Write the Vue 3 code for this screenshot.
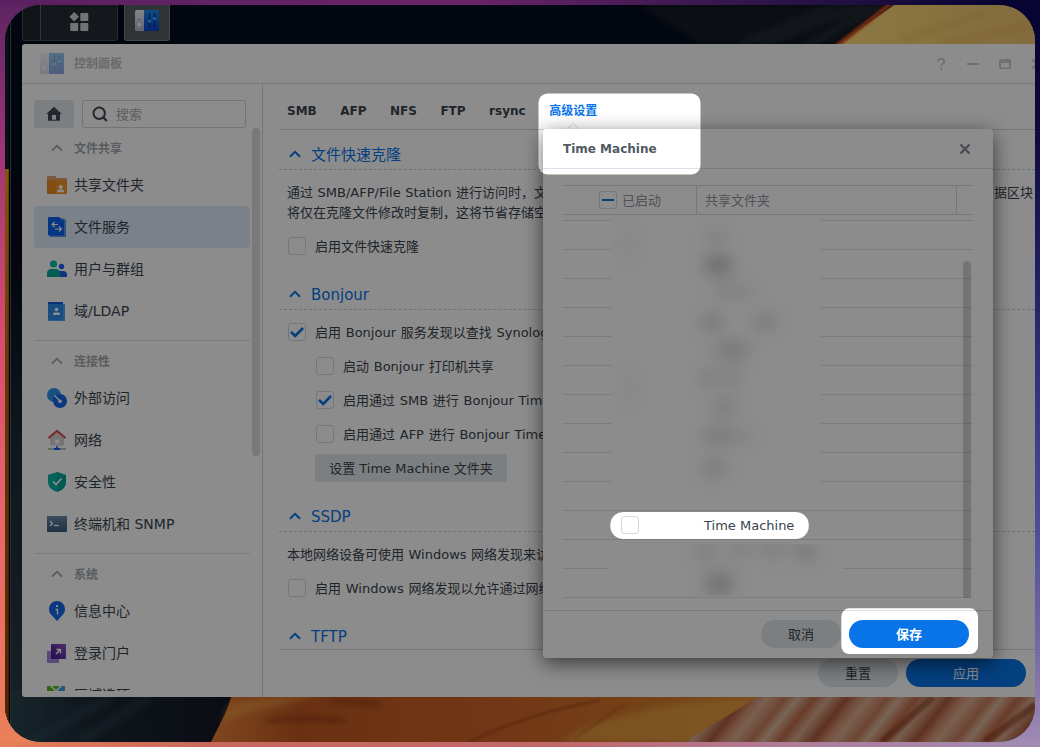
<script setup>
const groups = [
  {
    title: '文件共享',
    items: [
      { label: '共享文件夹', icon: 'folder' },
      { label: '文件服务', icon: 'service', active: true },
      { label: '用户与群组', icon: 'users' },
      { label: '域/LDAP', icon: 'ldap' },
    ],
  },
  {
    title: '连接性',
    items: [
      { label: '外部访问', icon: 'external' },
      { label: '网络', icon: 'network' },
      { label: '安全性', icon: 'security' },
      { label: '终端机和 SNMP', icon: 'terminal' },
    ],
  },
  {
    title: '系统',
    items: [
      { label: '信息中心', icon: 'info' },
      { label: '登录门户', icon: 'portal' },
      { label: '区域选项', icon: 'region' },
    ],
  },
]

const tabs = ['SMB', 'AFP', 'NFS', 'FTP', 'rsync']
const rows = Array.from({ length: 14 }, (_, i) => (i === 11 ? 'Time Machine' : ''))
</script>

<template>
  <div class="backdrop">
    <div class="frame">
      <svg class="wallpaper" width="1030" height="737" viewBox="5 5 1030 737">
        <defs>
          <linearGradient id="wpDark" x1="0" y1="0" x2="0" y2="1">
            <stop offset="0" stop-color="#030c1e" />
            <stop offset=".35" stop-color="#070c1e" />
            <stop offset=".6" stop-color="#1b2b3a" />
            <stop offset=".85" stop-color="#263540" />
            <stop offset="1" stop-color="#26404c" />
          </linearGradient>
          <linearGradient id="wpBottom" x1="0" y1="0" x2="1" y2="0">
            <stop offset="0" stop-color="#2a4650" />
            <stop offset=".35" stop-color="#1d2834" />
            <stop offset="1" stop-color="#101422" />
          </linearGradient>
          <linearGradient id="wpOrange" x1="0" y1="0" x2="1" y2="0">
            <stop offset="0" stop-color="#ea8038" />
            <stop offset=".15" stop-color="#c05a22" />
            <stop offset=".5" stop-color="#d06428" />
            <stop offset=".75" stop-color="#d4782c" />
            <stop offset="1" stop-color="#e09038" />
          </linearGradient>
          <linearGradient id="wpYellow" x1="0" y1="0" x2="1" y2="0">
            <stop offset="0" stop-color="#ffdc7c" />
            <stop offset=".5" stop-color="#f6cf72" />
            <stop offset="1" stop-color="#f0c472" />
          </linearGradient>
          <linearGradient id="wpStripe" gradientUnits="userSpaceOnUse" x1="0" y1="0" x2="62" y2="50" spreadMethod="repeat">
            <stop offset="0" stop-color="#dcae90" />
            <stop offset=".18" stop-color="#c87c5c" />
            <stop offset=".3" stop-color="#dcb89c" />
            <stop offset=".46" stop-color="#c06c4a" />
            <stop offset=".6" stop-color="#d8aa8c" />
            <stop offset=".78" stop-color="#ac5a3c" />
            <stop offset=".9" stop-color="#d49070" />
            <stop offset="1" stop-color="#dcae90" />
          </linearGradient>
          <linearGradient id="edgeStrip" x1="0" y1="0" x2="0" y2="1">
            <stop offset="0" stop-color="#ee9e14" />
            <stop offset=".35" stop-color="#bc6410" />
            <stop offset="1" stop-color="#90400e" />
          </linearGradient>
          <filter id="soft"><feGaussianBlur stdDeviation="3" /></filter>
          <filter id="soft1"><feGaussianBlur stdDeviation="1" /></filter>
        </defs>
        <rect x="5" y="5" width="1030" height="737" fill="url(#wpDark)" />
        <path d="M640 5H900L840 44H700Z" fill="#151c28" filter="url(#soft)" />
        <path d="M740 44L850 0M760 44L866 5M800 50L880 5" stroke="#3e4c50" stroke-width="4" opacity=".6" filter="url(#soft)" fill="none" />
        <path d="M838 44L894 5H1035V60H838Z" fill="url(#wpYellow)" />
        <path d="M834 48L893 2" stroke="#d64f20" stroke-width="4" filter="url(#soft1)" />
        <path d="M900 40L990 12M940 44L1030 26" stroke="#e8b45c" stroke-width="6" opacity=".5" filter="url(#soft)" />
        <rect x="5" y="690" width="260" height="52" fill="url(#wpBottom)" />
        <path d="M30 742L110 697M80 742L150 697" stroke="#34525c" stroke-width="10" opacity=".35" filter="url(#soft)" />
        <path d="M232 695L226 712L211 742H790V695Z" fill="url(#wpOrange)" />
        <path d="M228 706Q290 690 330 692L270 708Q240 714 222 724Z" fill="#f4a84c" opacity=".5" filter="url(#soft)" />
        <path d="M266 722Q300 716 345 722M330 700L380 704" stroke="#7c2c10" stroke-width="7" opacity=".4" filter="url(#soft)" fill="none" />
        <path d="M470 742Q520 716 600 700" stroke="#94401a" stroke-width="3" opacity=".5" filter="url(#soft1)" fill="none" />
        <path d="M560 742Q620 702 760 698L690 742Z" fill="#e8a444" opacity=".7" filter="url(#soft)" />
        <path d="M575 738L625 704" stroke="#a4561e" stroke-width="2" opacity=".6" filter="url(#soft1)" />
        <path d="M762 695L684 742H1035V695Z" fill="url(#wpStripe)" />
        <path d="M933 697L882 742M1035 705L985 742" stroke="#7f3218" stroke-width="7" opacity=".55" filter="url(#soft1)" />
        <path d="M5 5H9V742H5Z" fill="#0a2028" />
        <path d="M5 169H9V742H5Z" fill="url(#edgeStrip)" />
        <path d="M9.5 5V742" stroke="#020205" stroke-width="1.4" />
        <path d="M10.5 5V742" stroke="#50565c" stroke-width="1" />
      </svg>

      <div class="taskbar">
        <div class="menu-button">
          <svg width="20" height="20" viewBox="0 0 20 20" fill="#d0d2d6">
            <path d="M5.2 0L10 4.8 5.2 9.6.4 4.8Z" />
            <rect x="11.3" y="1" width="8" height="8" rx=".8" />
            <rect x="1.2" y="11" width="8" height="8" rx=".8" />
            <rect x="11.3" y="11" width="8" height="8" rx=".8" />
          </svg>
        </div>
        <div class="app-button">
          <svg width="24" height="22" viewBox="0 0 24 22">
            <defs>
              <linearGradient id="panelA" x1="0" y1="0" x2="0" y2="1">
                <stop offset="0" stop-color="#f0f0fa" /><stop offset="1" stop-color="#b4b4d2" />
              </linearGradient>
              <linearGradient id="panelB" x1="0" y1="0" x2="0" y2="1">
                <stop offset="0" stop-color="#1b8ce8" /><stop offset="1" stop-color="#0b3fd0" />
              </linearGradient>
            </defs>
            <path d="M1.5 0H9V21H1.5Q0 21 0 19.500V1.500Q0 0 1.500 0Z" fill="url(#panelA)" />
            <path d="M9 0H23Q24 0 24 1V20Q24 21 23 21H9Z" fill="url(#panelB)" />
            <circle cx="4.500" cy="14.500" r="2.600" fill="#f4f4fb" stroke="#a4a4c0" stroke-width=".6" />
            <circle cx="4.500" cy="9.500" r=".6" fill="#555" />
            <path d="M14.500 3V17M19.500 3V17" stroke="#0a2d78" stroke-width="1.100" />
            <circle cx="14.500" cy="11" r="1.500" fill="#48b4ff" /><circle cx="19.500" cy="8.500" r="1.500" fill="#48b4ff" />
          </svg>
        </div>
      </div>

      <section class="window">
        <header class="titlebar">
          <svg class="title-icon" width="24" height="22" viewBox="0 0 24 22">
            <path d="M1.500 0H9V21H1.500Q0 21 0 19.500V1.500Q0 0 1.500 0Z" fill="url(#panelA)" />
            <path d="M9 0H23Q24 0 24 1V20Q24 21 23 21H9Z" fill="url(#panelB)" />
            <circle cx="4.500" cy="14.500" r="2.600" fill="#f4f4fb" stroke="#a4a4c0" stroke-width=".6" />
            <circle cx="4.500" cy="9.500" r=".6" fill="#555" />
            <path d="M14.500 3V17M19.500 3V17" stroke="#0a2d78" stroke-width="1.100" />
            <circle cx="14.500" cy="11" r="1.500" fill="#48b4ff" /><circle cx="19.500" cy="8.500" r="1.500" fill="#48b4ff" />
          </svg>
          <span class="title-text">控制面板</span>
          <div class="controls">
            <svg viewBox="0 0 16 16"><path d="M4.800 5.600Q4.800 2.900 8 2.900T11.200 5.600Q11.200 7.100 9.600 8 8.200 8.800 8.200 10.600" fill="none" stroke="#cdcdcd" stroke-width="1.800" /><rect x="7.200" y="12.200" width="2" height="2" fill="#cdcdcd" /></svg>
            <svg viewBox="0 0 16 16"><rect x="2" y="7" width="12" height="2" fill="#cdcdcd" /></svg>
            <svg viewBox="0 0 16 16"><path d="M3 3H13Q14 3 14 4V12Q14 13 13 13H3Q2 13 2 12V4Q2 3 3 3ZM4 7V11.500H12V7Z" fill="#cdcdcd" fill-rule="evenodd" /></svg>
            <svg viewBox="0 0 16 16"><path d="M3.500 3.500L12.500 12.500M12.500 3.500L3.500 12.500" stroke="#cdcdcd" stroke-width="2.400" /></svg>
          </div>
        </header>

        <div class="body">
          <aside class="sidebar">
            <div class="search-row">
              <div class="home">
                <svg width="16" height="16" viewBox="0 0 16 16"><path d="M8 .8L15.800 8H14V14.700H2V8H.2Z" fill="#414b55" /><rect x="6" y="9" width="4" height="4.700" fill="#e4eaf0" /></svg>
              </div>
              <div class="search">
                <svg width="16" height="16" viewBox="0 0 16 16" fill="none" stroke="#414b55" stroke-width="2"><circle cx="7.200" cy="7.200" r="5.700" /><path d="M11 11L14.800 15" stroke-width="2.200" /></svg>
                <span class="label">搜索</span>
              </div>
            </div>
            <nav class="nav">
              <div v-for="g in groups" :key="g.title" class="group">
                <div class="group-title">
                  <svg width="12" height="8" viewBox="0 0 12 8"><path d="M1 6.700L6 1.700 11 6.700" fill="none" stroke="#9fa5aa" stroke-width="1.800" /></svg>
                  <span class="label">{{ g.title }}</span>
                </div>
                <div v-for="it in g.items" :key="it.label" class="item" :class="{ active: it.active }">
                  <svg class="item-icon" width="20" height="20" viewBox="0 0 20 20">
                    <template v-if="it.icon === 'folder'">
                      <path d="M1 1H8L10 3H19Q20 3 20 4V10H0V2Q0 1 1 1Z" fill="#e0a070" />
                      <path d="M0 5H20V18Q20 19 19 19H1Q0 19 0 18Z" fill="#ed8a24" />
                      <path d="M9 5H20V18Q20 19 19 19H9Z" fill="#f89c34" opacity=".6" />
                      <circle cx="13.700" cy="12" r="2" fill="#fff" /><path d="M10 17.200Q10 14.600 12 14.600H15.200Q17.200 14.600 17.200 17.200Z" fill="#fff" />
                    </template>
                    <template v-else-if="it.icon === 'service'">
                      <path d="M3 1.500H17L19 3.500V20H3Z" fill="#5a93e8" />
                      <path d="M2 0H12L17 4V18.500H1V1Q1 0 2 0Z" fill="#0a62ee" />
                      <path d="M11 7.500H5M7.500 5L5 7.500 7.500 10M8 12H14.500M12 9.500L14.500 12 12 14.500" stroke="#fff" stroke-width="1.100" fill="none" />
                    </template>
                    <template v-else-if="it.icon === 'users'">
                      <circle cx="6.500" cy="5" r="3.600" fill="#10bcb0" />
                      <circle cx="14.500" cy="7.500" r="2.700" fill="#1a62ee" />
                      <path d="M11 12H16Q20 12 20 16V18H11Z" fill="#1e5ce8" />
                      <path d="M0 18V14.500Q0 10 4.500 10H8.500Q13 10 13 14.500V18Z" fill="#08a89c" />
                    </template>
                    <template v-else-if="it.icon === 'ldap'">
                      <path d="M2 1H16V4H1V2Q1 1 2 1Z" fill="#0a5ce0" /><path d="M3 3H18V20H2Q1 20 1 19V3Z" fill="#4aa4f4" /><path d="M1 3H16V19H1Z" fill="#2a8ee8" />
                      <circle cx="9.500" cy="8.500" r="1.800" fill="#fff" /><path d="M6 14V12.500Q6 11.500 7.500 11.500H11.500Q13 11.500 13 12.500V14Z" fill="#fff" />
                    </template>
                    <template v-else-if="it.icon === 'external'">
                      <circle cx="7" cy="7" r="7" fill="#2d93ea" /><circle cx="13" cy="13" r="7" fill="#1763e8" />
                      <path d="M7.500 7.500L12.500 12.500" stroke="#fff" stroke-width="1.200" /><circle cx="13" cy="13.200" r="1.800" fill="#fff" />
                    </template>
                    <template v-else-if="it.icon === 'network'">
                      <path d="M3 8L10 2.500 17 8V15.500H3Z" fill="#d3d3d3" />
                      <path d="M1.500 8L10 1 18.500 8" fill="none" stroke="#df4846" stroke-width="2.200" />
                      <rect x="8" y="9.500" width="4" height="4" fill="#fff" /><rect x="1" y="18" width="18" height="1.800" fill="#b5b9bf" /><path d="M9.200 16H10.800V18H13V20H7V18H9.200Z" fill="#0a62ee" />
                    </template>
                    <template v-else-if="it.icon === 'security'">
                      <path d="M10 0L19 3V10Q19 17 10 20 1 17 1 10V3Z" fill="#0cb2a6" /><path d="M10 0L19 3V10Q19 17 10 20Z" fill="#07a59a" />
                      <path d="M6 9.500L9 12.500 14.500 6.500" fill="none" stroke="#fff" stroke-width="1.700" />
                    </template>
                    <template v-else-if="it.icon === 'terminal'">
                      <rect x="0" y="2" width="20" height="16" rx="1" fill="url(#term)" />
                      <defs><linearGradient id="term" x1="0" y1="0" x2="0" y2="1"><stop offset="0" stop-color="#6b8aa8" /><stop offset="1" stop-color="#37597c" /></linearGradient></defs>
                      <path d="M3 7L5.500 9.500 3 12" fill="none" stroke="#fff" stroke-width="1.200" /><path d="M7 11.500H12" stroke="#fff" stroke-width="1.200" />
                    </template>
                    <template v-else-if="it.icon === 'info'">
                      <path d="M10 0A8 8 0 0 1 18 8Q18 12 14.500 15L10 20 5.500 15Q2 12 2 8A8 8 0 0 1 10 0Z" fill="#1567ec" />
                      <rect x="9" y="4" width="2" height="2" fill="#fff" /><path d="M8.500 8.500H10.500V13.500" fill="none" stroke="#fff" stroke-width="1.300" />
                    </template>
                    <template v-else-if="it.icon === 'portal'">
                      <rect x="0" y="8" width="12" height="12" rx="1" fill="#a688dc" /><rect x="4" y="1" width="15" height="15" rx="1" fill="url(#port)" />
                      <defs><linearGradient id="port" x1="1" y1="0" x2="0" y2="1"><stop offset="0" stop-color="#8c50ba" /><stop offset="1" stop-color="#3a1e96" /></linearGradient></defs>
                      <path d="M9 11L13.500 6.500M9.500 6.500H13.500V10.500" fill="none" stroke="#fff" stroke-width="1.300" />
                    </template>
                    <template v-else>
                      <rect x="0" y="1" width="18" height="18" fill="#5cb41c" /><path d="M18 1V19L9 6 14 1Z" fill="#3d9eea" /><path d="M4 1L9 6 14 1M9 6V19" fill="none" stroke="#fff" stroke-width="1.500" />
                    </template>
                  </svg>
                  <span class="label">{{ it.label }}</span>
                </div>
              </div>
            </nav>
            <div class="side-scroll"></div>
          </aside>

          <main class="main">
            <div class="tabs">
              <span v-for="t in tabs" :key="t" class="tab">{{ t }}</span>
              <span class="tab current">高级设置
                <svg class="tab-arrow" width="14" height="8" viewBox="0 0 14 8"><path d="M1 7.500L7 1.500 13 7.500" fill="#fff" stroke="#ccd8e2" /></svg>
              </span>
            </div>
            <div class="content">
              <section class="sect">
                <h3 class="head"><svg class="chev" viewBox="0 0 12 8"><path d="M1 6.800L6 1.800 11 6.800" /></svg><span class="label">文件快速克隆</span></h3>
                <div class="desc">
                  <div class="desc-line"><span>通过 SMB/AFP/File Station 进行访问时，文</span><span>据区块</span></div>
                  <div class="desc-line"><span>将仅在克隆文件修改时复制，这将节省存储空</span></div>
                </div>
                <div class="check-row"><i class="box"></i><span class="label">启用文件快速克隆</span></div>
              </section>
              <section class="sect">
                <h3 class="head"><svg class="chev" viewBox="0 0 12 8"><path d="M1 6.800L6 1.800 11 6.800" /></svg><span class="label">Bonjour</span></h3>
                <div class="checks">
                  <div class="check-row"><i class="box"><svg viewBox="0 0 16 16"><path d="M2 7.800L6.200 12 14 4" /></svg></i><span class="label">启用 Bonjour 服务发现以查找 Synology</span></div>
                  <div class="check-row sub"><i class="box"></i><span class="label">启动 Bonjour 打印机共享</span></div>
                  <div class="check-row sub"><i class="box"><svg viewBox="0 0 16 16"><path d="M2 7.800L6.200 12 14 4" /></svg></i><span class="label">启用通过 SMB 进行 Bonjour Time</span></div>
                  <div class="check-row sub"><i class="box"></i><span class="label">启用通过 AFP 进行 Bonjour Time</span></div>
                </div>
                <div class="flat-button">设置 Time Machine 文件夹</div>
              </section>
              <section class="sect">
                <h3 class="head"><svg class="chev" viewBox="0 0 12 8"><path d="M1 6.800L6 1.800 11 6.800" /></svg><span class="label">SSDP</span></h3>
                <div class="desc">
                  <div class="desc-line"><span>本地网络设备可使用 Windows 网络发现来访</span></div>
                </div>
                <div class="check-row"><i class="box"></i><span class="label">启用 Windows 网络发现以允许通过网络</span></div>
              </section>
              <section class="sect">
                <h3 class="head"><svg class="chev" viewBox="0 0 12 8"><path d="M1 6.800L6 1.800 11 6.800" /></svg><span class="label">TFTP</span></h3>
              </section>
            </div>
            <footer class="footer">
              <div class="pill">重置</div>
              <div class="pill primary">应用</div>
            </footer>
          </main>
        </div>
      </section>

      <section class="dialog">
        <header class="dialog-title">
          <span>Time Machine</span>
          <svg width="12" height="12" viewBox="0 0 12 12"><path d="M1.500 1.500L10.500 10.500M10.500 1.500L1.500 10.500" stroke="#858d94" stroke-width="2.400" /></svg>
        </header>
        <div class="table">
          <div class="thead">
            <div class="col-enabled"><i class="box"><b></b></i><span class="label">已启动</span></div>
            <div class="col-name"><span class="label">共享文件夹</span></div>
          </div>
          <div class="tbody">
            <div v-for="(r, i) in rows" :key="i" class="row">
              <template v-if="r"><i class="box"></i><span>{{ r }}</span></template>
            </div>
            <svg class="mask mask-top" width="209" height="290" viewBox="612 216 209 290">
              <filter id="smear" x="-100%" y="-100%" width="300%" height="300%"><feGaussianBlur stdDeviation="8" /></filter>
              <rect x="612" y="216" width="209" height="290" fill="#fff" />
              <g filter="url(#smear)" fill="#6a7074">
                <ellipse cx="718" cy="265" rx="15" ry="10" opacity=".4" /><ellipse cx="716" cy="236" rx="12" ry="10" opacity=".12" />
                <ellipse cx="733" cy="291" rx="22" ry="8" opacity=".15" /><ellipse cx="712" cy="322" rx="13" ry="9" opacity=".26" />
                <ellipse cx="765" cy="322" rx="14" ry="9" opacity=".2" /><ellipse cx="732" cy="350" rx="18" ry="9" opacity=".27" />
                <ellipse cx="708" cy="378" rx="10" ry="10" opacity=".18" /><ellipse cx="732" cy="378" rx="10" ry="12" opacity=".16" />
                <ellipse cx="724" cy="408" rx="12" ry="9" opacity=".22" /><ellipse cx="717" cy="436" rx="17" ry="9" opacity=".23" />
                <ellipse cx="742" cy="437" rx="12" ry="8" opacity=".12" /><ellipse cx="714" cy="468" rx="14" ry="10" opacity=".2" />
                <ellipse cx="629" cy="388" rx="9" ry="18" opacity=".07" /><ellipse cx="628" cy="245" rx="10" ry="22" opacity=".05" />
              </g>
            </svg>
            <svg class="mask mask-bottom" width="234" height="52" viewBox="609 544 234 52">
              <rect x="609" y="544" width="234" height="52" fill="#fff" />
              <g filter="url(#smear)" fill="#6a7074">
                <ellipse cx="719" cy="584" rx="16" ry="13" opacity=".3" /><ellipse cx="706" cy="552" rx="12" ry="9" opacity=".17" />
                <ellipse cx="740" cy="550" rx="12" ry="9" opacity=".15" /><ellipse cx="772" cy="550" rx="14" ry="9" opacity=".15" /><ellipse cx="805" cy="552" rx="14" ry="10" opacity=".2" />
              </g>
            </svg>
            <div class="table-scroll"></div>
          </div>
        </div>
        <footer class="dialog-footer">
          <div class="pill">取消</div>
          <div class="pill primary strong">保存</div>
        </footer>
      </section>

      <svg class="spotlight" width="1030" height="737" viewBox="5 5 1030 737">
        <mask id="holes">
          <rect x="5" y="5" width="1030" height="737" fill="#fff" />
          <rect x="538.500" y="93.500" width="162" height="81" rx="9" fill="#000" />
          <rect x="610.300" y="512" width="198.500" height="27" rx="13" fill="#000" />
          <rect x="841.300" y="608.300" width="136.700" height="45.700" rx="8" fill="#000" />
        </mask>
        <rect x="5" y="5" width="1030" height="737" fill="#000" fill-opacity=".45" mask="url(#holes)" />
      </svg>
    </div>
  </div>
</template>

<style>
body {
  overflow: hidden;
}
</style>

<style scoped>
.backdrop {
  position: relative;
  width: 1040px;
  height: 747px;
  overflow: hidden;
  box-sizing: border-box;
  padding: 5px;
  background: linear-gradient(180deg, #5c2462 0, #a03478 20%, #d64c70 45%, #e8666a 70%, #ea8058 100%);
  font-family: "DejaVu Sans", "Noto Sans CJK SC", sans-serif;
  font-size: 13px;
  color: #3a444e;
}
.backdrop::before {
  content: "";
  position: absolute;
  inset: 0;
  background:
    linear-gradient(90deg, #5a2060 0, #6b2468 45%, #2c1448 75%, #060430 97%) 0 0 / 100% 5px no-repeat,
    linear-gradient(90deg, #e67e58 0, #c8685c 20%, #c0686c 55%, #b07a98 75%, #a08cb4 100%) 0 100% / 100% 5px no-repeat,
    linear-gradient(180deg, #070432 0, #0c0838 15%, #201c60 35%, #4c4c9a 70%, #7468a4 86%, #a08cb4 100%) 100% 0 / 40px 100% no-repeat;
}
.frame {
  position: relative;
  width: 1030px;
  height: 737px;
  border-radius: 36px;
  overflow: hidden;
}
.label {
  line-height: 20px;
  padding-top: 1px;
}
.wallpaper,
.spotlight {
  position: absolute;
  inset: 0;
  display: block;
}
.taskbar {
  position: absolute;
  left: 17px;
  top: 0;
  display: flex;
  gap: 6px;
}
.menu-button,
.app-button {
  box-sizing: border-box;
  height: 36px;
  border: 1px solid #454c54;
  border-top: 0;
  border-radius: 0 0 3px 3px;
  display: flex;
}
.menu-button {
  width: 96px;
  background: linear-gradient(90deg, #1e242c 17px, #5e6368 17px, #5e6368 18px, #262c36 18px);
  padding: 7px 0 0 46px;
}
.app-button {
  width: 46px;
  background: #59605f;
  border-color: #7d8484;
  padding: 5px 0 0 10px;
}
.window {
  position: absolute;
  left: 17px;
  top: 39px;
  width: 1028px;
  height: 653px;
  background: #fff;
  border-radius: 3px;
  overflow: hidden;
  display: flex;
  flex-direction: column;
}
.titlebar {
  box-sizing: border-box;
  flex: none;
  height: 40px;
  border-bottom: 1px solid #d4dae0;
  display: flex;
  align-items: center;
  padding-left: 18px;
}
.title-icon {
  opacity: .45;
}
.title-text {
  margin-left: 10px;
  line-height: 20px;
  font-size: 12px;
  font-weight: 700;
  color: #bdc0c3;
}
.controls {
  margin-left: auto;
  display: flex;
  gap: 16px;
  padding-right: 5px;
}
.controls svg {
  width: 16px;
  height: 16px;
}
.body {
  flex: 1;
  display: flex;
  min-height: 0;
}
.sidebar {
  position: relative;
  box-sizing: border-box;
  width: 241px;
  flex: none;
  border-right: 1px solid #d0d6df;
  padding: 16px 12px 6px;
  display: flex;
  flex-direction: column;
}
.search-row {
  display: flex;
  gap: 8px;
  flex: none;
}
.home {
  width: 40px;
  height: 28px;
  background: #e2e8ed;
  border-radius: 3px;
  display: flex;
  align-items: center;
  justify-content: center;
}
.search {
  box-sizing: border-box;
  width: 164px;
  height: 28px;
  border: 1px solid #ccd6de;
  border-radius: 3px;
  display: flex;
  align-items: center;
  gap: 8px;
  padding-left: 9px;
  color: #a6abb0;
}
.nav {
  flex: 1;
  min-height: 0;
  overflow: hidden;
}
.group + .group {
  margin-top: 8px;
  border-top: 1px solid #dfe2e5;
}
.group-title {
  box-sizing: border-box;
  height: 36px;
  padding: 4px 0 0 17px;
  display: flex;
  align-items: center;
  gap: 11px;
  font-size: 12px;
  font-weight: 700;
  color: #a2a7ac;
}
.item {
  height: 42px;
  display: flex;
  align-items: center;
  gap: 7px;
  padding-left: 13px;
  font-size: 14px;
  border-radius: 4px;
}
.item .label {
  padding: 0 0 1px;
}
.item-icon {
  flex: none;
}
.item.active {
  background: #dfebf8;
}
.side-scroll {
  position: absolute;
  right: 2px;
  top: 44px;
  width: 8px;
  height: 328px;
  border-radius: 4px;
  background: #dcdcdc;
}
.main {
  flex: 1;
  min-width: 0;
  display: flex;
  flex-direction: column;
  padding-left: 16px;
}
.tabs {
  flex: none;
  box-sizing: border-box;
  height: 46px;
  border-bottom: 1px solid #d3d9df;
  padding: 0 0 0 8px;
  display: flex;
  gap: 23.5px;
  line-height: 54px;
  font-size: 12px;
  font-weight: 700;
}
.tab.current {
  position: relative;
  color: #0874e8;
}
.tab-arrow {
  position: absolute;
  left: 17px;
  top: 38px;
}
.content {
  flex: 1;
  min-height: 0;
  overflow: hidden;
  padding-top: 9px;
}
.sect {
  margin-bottom: 16px;
}
.head {
  margin: 0;
  box-sizing: border-box;
  height: 31px;
  border-bottom: 1px dashed #cbd0d5;
  display: flex;
  align-items: center;
  padding-left: 10px;
  font-size: 15px;
  font-weight: 400;
  color: #0874e8;
}
.chev {
  width: 12px;
  height: 8px;
  margin-right: 10px;
  fill: none;
  stroke: #0874e8;
  stroke-width: 2;
}
.desc {
  margin: 12px 17px 7px 8px;
}
.desc-line {
  display: flex;
  justify-content: space-between;
  height: 20px;
  line-height: 22px;
  white-space: nowrap;
  word-spacing: .4px;
}
.checks {
  padding: 5px 0 3px;
}
.check-row {
  height: 34px;
  display: flex;
  align-items: center;
  gap: 9px;
  padding-left: 9px;
  white-space: nowrap;
  word-spacing: .6px;
}
.check-row.sub {
  padding-left: 37px;
}
.box {
  box-sizing: border-box;
  flex: none;
  width: 18px;
  height: 18px;
  border: 1px solid #d0dae3;
  border-radius: 3px;
  display: flex;
  align-items: center;
  justify-content: center;
}
.box svg {
  width: 16px;
  height: 16px;
  fill: none;
  stroke: #0874e8;
  stroke-width: 2.600;
}
.box b {
  width: 12px;
  height: 2px;
  background: #0874e8;
}
.flat-button {
  width: 192px;
  height: 28px;
  margin: 0 0 19px 36px;
  border-radius: 3px;
  background: #e1e7ec;
  line-height: 30px;
  text-align: center;
}
.footer {
  flex: none;
  box-sizing: border-box;
  height: 48px;
  border-top: 1px solid #d3d9de;
  display: flex;
  justify-content: flex-end;
  gap: 8px;
  padding: 9px 24px 0 0;
}
.pill {
  width: 80px;
  height: 28px;
  border-radius: 14px;
  background: #e1e7ec;
  line-height: 30px;
  text-align: center;
}
.pill.primary {
  width: 120px;
  background: #0874e8;
  color: #fff;
}
.pill.strong {
  font-weight: 700;
}
.dialog {
  position: absolute;
  left: 538px;
  top: 124px;
  width: 450px;
  height: 529px;
  background: #fff;
  border-radius: 3px;
  box-shadow: 0 5px 20px rgba(0, 0, 0, .6);
  display: flex;
  flex-direction: column;
}
.dialog-title {
  box-sizing: border-box;
  height: 40px;
  flex: none;
  border-bottom: 1px solid #d8e1ea;
  padding: 0 22px 0 20px;
  display: flex;
  align-items: center;
  justify-content: space-between;
  font-size: 12px;
  font-weight: 700;
  color: #505a64;
}
.table {
  flex: 1;
  min-height: 0;
  margin: 16px 20px 12px;
  display: flex;
  flex-direction: column;
}
.thead {
  flex: none;
  box-sizing: border-box;
  height: 30px;
  border-top: 1px solid #d4dce3;
  border-bottom: 1px solid #d4dce3;
  display: flex;
  color: #8f969d;
}
.col-enabled,
.col-name {
  box-sizing: border-box;
  display: flex;
  align-items: center;
  border-right: 1px solid #d4dce3;
}
.col-enabled {
  width: 134px;
  padding-left: 36px;
  gap: 5px;
}
.col-name {
  width: 260px;
  padding-left: 8px;
}
.tbody {
  position: relative;
  flex: 1;
  min-height: 0;
  overflow: hidden;
}
.row {
  box-sizing: border-box;
  height: 29px;
  border-bottom: 1px solid #e0e4e7;
  display: flex;
  align-items: center;
  padding-left: 58px;
  gap: 65px;
}
.row:first-child {
  margin-top: -23px;
}
.mask {
  position: absolute;
  display: block;
}
.mask-top {
  left: 49px;
  top: 1px;
}
.mask-bottom {
  left: 46px;
  top: 329px;
}
.table-scroll {
  position: absolute;
  right: 2px;
  top: 46px;
  width: 8px;
  height: 338px;
  border-radius: 4px;
  background: rgba(110, 110, 110, .3);
}
.dialog-footer {
  flex: none;
  box-sizing: border-box;
  height: 48px;
  border-top: 1px solid #d6dee6;
  padding: 9px 24px 0 0;
  display: flex;
  justify-content: flex-end;
  gap: 8px;
}
</style>
